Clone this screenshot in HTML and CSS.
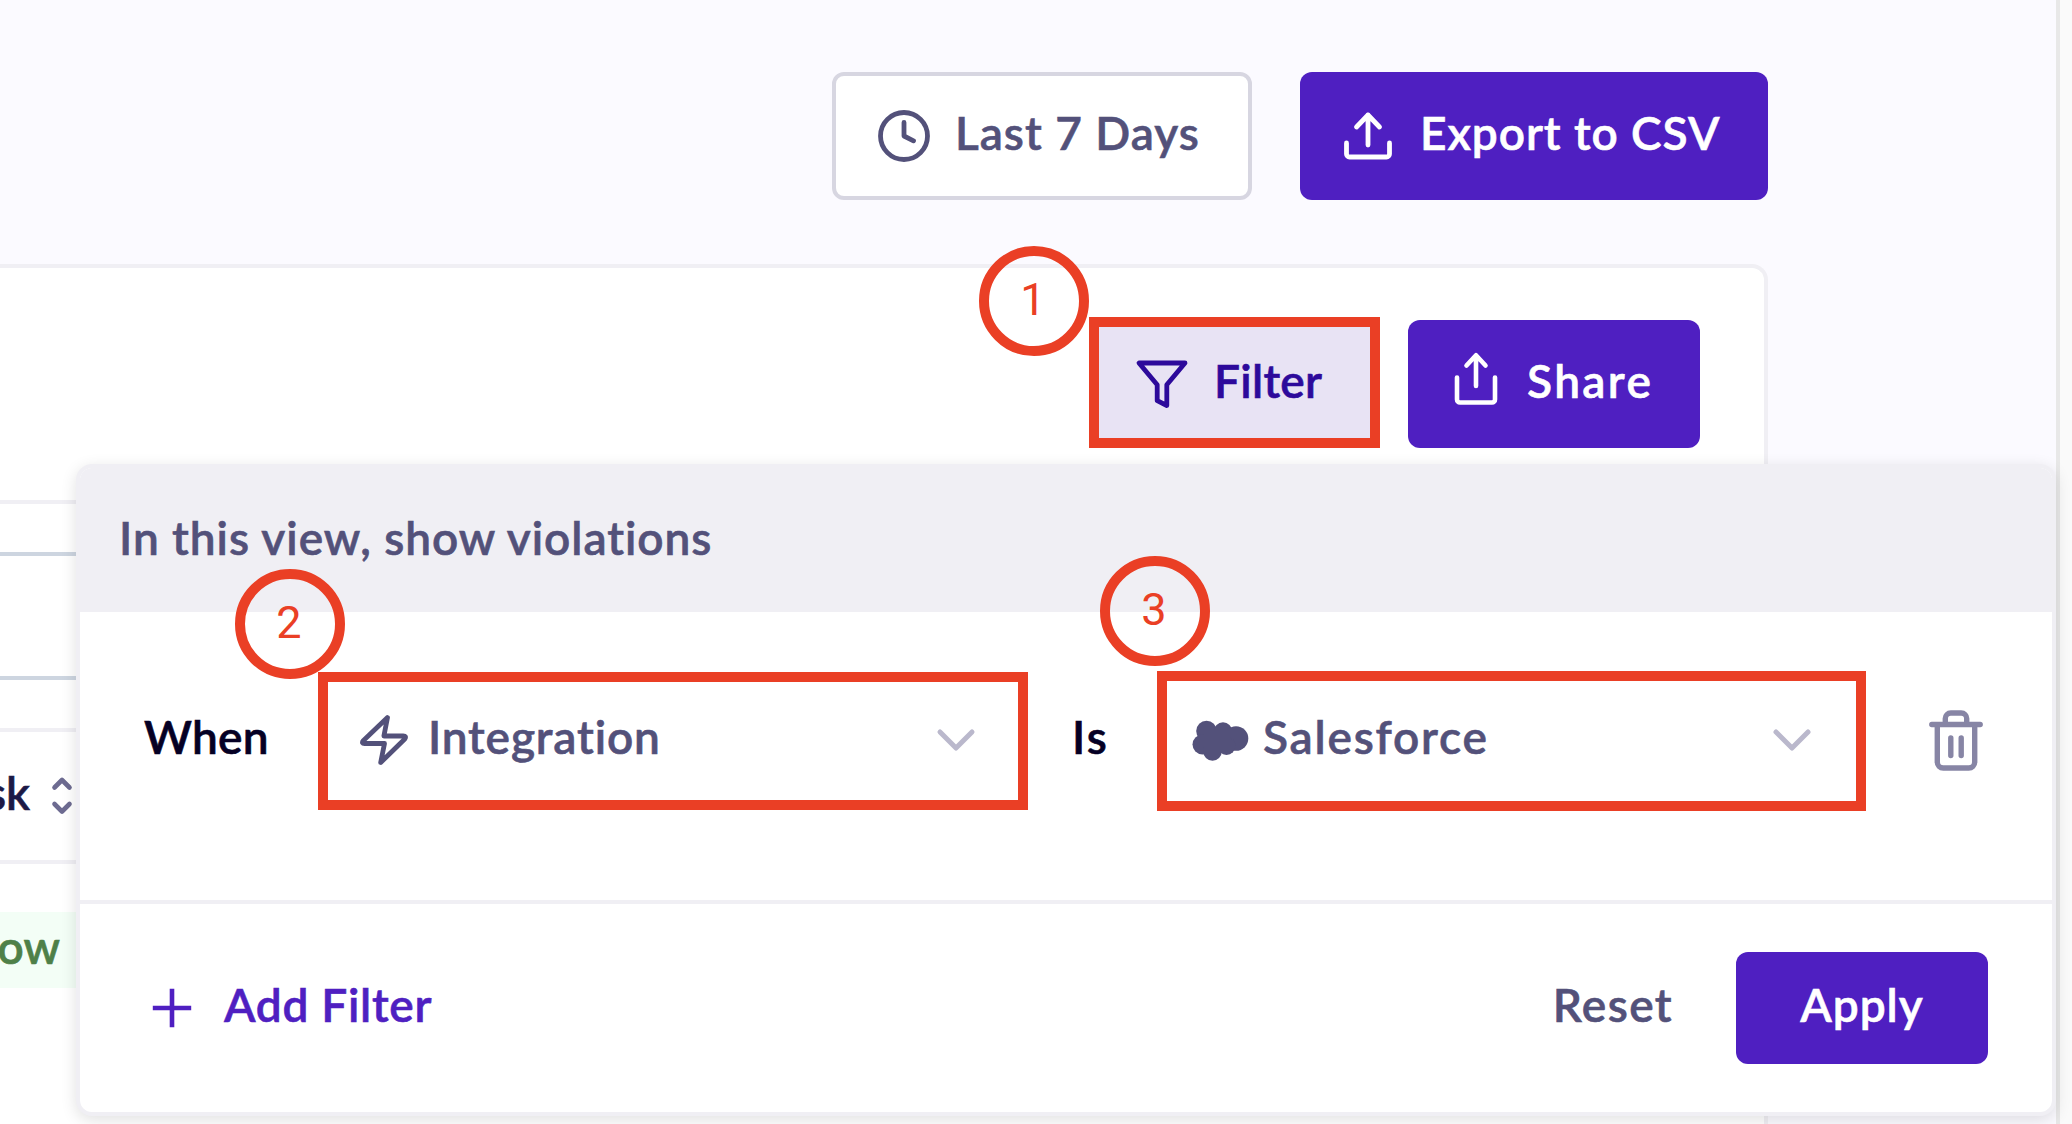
FILE: index.html
```
<!DOCTYPE html>
<html lang="en">
<head>
<meta charset="utf-8">
<title>Violations</title>
<link rel="stylesheet" href="styles.css">
</head>
<body>
<div class="app">
  <main class="main">
    <header class="topbar">
      <button class="btn btn-outline btn-date">
        <svg class="icon" width="56" height="56" viewBox="0 0 56 56" fill="none" stroke="currentColor" stroke-width="4.800" stroke-linecap="round" stroke-linejoin="round"><circle cx="28" cy="28" r="23.5"/><path d="M28 14.500V28l9.500 4.800"/></svg>
        <span class="label label-date">Last 7 Days</span>
      </button>
      <button class="btn btn-primary btn-export">
        <svg class="icon" width="56" height="56" viewBox="0 0 56 56" fill="none" stroke="currentColor" stroke-width="4.800" stroke-linecap="round" stroke-linejoin="round"><path d="M6.500 35v11a3 3 0 0 0 3 3h37a3 3 0 0 0 3-3V35M28 37V7M16.500 19L28 7l11.500 12"/></svg>
        <span class="label label-export">Export to CSV</span>
      </button>
    </header>

    <section class="card">
      <div class="toolbar">
        <button class="btn btn-soft btn-filter">
          <svg class="icon" width="56" height="56" viewBox="0 0 56 56" fill="none" stroke="currentColor" stroke-width="4.800" stroke-linejoin="round"><path d="M5 7h46L32.800 28.800v20.700l-9.600-4.800V28.800z"/></svg>
          <span class="label label-filter">Filter</span>
        </button>
        <button class="btn btn-primary btn-share">
          <svg class="icon" width="56" height="56" viewBox="0 0 56 56" fill="none" stroke="currentColor" stroke-width="4.600" stroke-linecap="round" stroke-linejoin="round"><path d="M9 21.500v22a3 3 0 0 0 3 3h32a3 3 0 0 0 3-3v-22M28 30V.3M18.500 9.500L28-.7l9.500 10.200"/></svg>
          <span class="label label-share">Share</span>
        </button>
      </div>
      <div class="table">
        <div class="row row-tabs"></div>
        <div class="row row-search"></div>
        <div class="row row-gap"></div>
        <div class="row row-head">
          <div class="cell cell-risk">
            <span class="label label-risk">Risk</span>
            <svg class="icon sort" width="20" height="40" viewBox="0 0 20 40" fill="none" stroke="currentColor" stroke-width="4.600" stroke-linecap="round" stroke-linejoin="round"><path d="M2.500 11.500L10 4l7.500 7.500M2.500 28L10 35.500l7.500-7.500"/></svg>
          </div>
        </div>
        <div class="row row-body">
          <div class="cell cell-level"><span class="chip"><span class="label">Low</span></span></div>
        </div>
      </div>
    </section>
  </main>
  <div class="gutter"></div>

  <section class="popover">
    <h2 class="popover-head"><span class="label label-title">In this view, show violations</span></h2>
    <div class="condition">
      <span class="label word-when">When</span>
      <div class="select">
        <svg class="icon" width="56" height="56" viewBox="0 0 56 56" fill="none" stroke="currentColor" stroke-width="4.800" stroke-linecap="round" stroke-linejoin="round"><path d="M31.500 4.500L7.200 27.800q-2 2.700 1.400 2.700H28.500L24.700 49.500L48.800 26q2-3-1.600-3H27.900z"/></svg>
        <span class="label label-integration">Integration</span>
        <svg class="icon chevron" width="38" height="24" viewBox="0 0 38 24" fill="none" stroke="currentColor" stroke-width="5" stroke-linecap="round" stroke-linejoin="round"><path d="M3 3l16 16L35 3"/></svg>
      </div>
      <span class="label word-is">Is</span>
      <div class="select select-value">
        <svg class="icon" width="58" height="42" viewBox="0 0 58 42" fill="currentColor"><circle cx="14.500" cy="11" r="10.300"/><circle cx="31" cy="11.500" r="9.200"/><circle cx="44" cy="18.500" r="12.300"/><circle cx="10.500" cy="24.500" r="10"/><circle cx="20.500" cy="31.500" r="9.300"/><circle cx="34.500" cy="26" r="9"/><path d="M12 10h26v22H12z"/></svg>
        <span class="label label-salesforce">Salesforce</span>
        <svg class="icon chevron" width="38" height="24" viewBox="0 0 38 24" fill="none" stroke="currentColor" stroke-width="5" stroke-linecap="round" stroke-linejoin="round"><path d="M3 3l16 16L35 3"/></svg>
      </div>
      <button class="trash" aria-label="Remove filter">
        <svg class="icon" width="54" height="62" viewBox="0 0 54 62" fill="none" stroke="currentColor" stroke-width="5.400" stroke-linecap="round" stroke-linejoin="round"><path d="M2.800 14.500h48.400M8.300 14.500V52a6 6 0 0 0 6 6h25.400a6 6 0 0 0 6-6V14.500M16.300 14V8.500a5.500 5.500 0 0 1 5.500-5.500h10.400a5.500 5.500 0 0 1 5.500 5.500V14M21.800 28v17.500M32.200 28v17.500"/></svg>
      </button>
    </div>
    <footer class="popover-foot">
      <button class="add">
        <svg class="icon" width="40" height="40" viewBox="0 0 40 40" fill="none" stroke="currentColor" stroke-width="4.600"><path d="M20 .8v38.400M.8 20h38.400"/></svg>
        <span class="label label-add">Add Filter</span>
      </button>
      <button class="reset"><span class="label label-reset">Reset</span></button>
      <button class="btn btn-primary btn-apply"><span class="label label-apply">Apply</span></button>
    </footer>
  </section>

  <div class="mark mark-filter"></div>
  <div class="mark mark-integration"></div>
  <div class="mark mark-salesforce"></div>
  <div class="step step-1">1</div>
  <div class="step step-2">2</div>
  <div class="step step-3">3</div>
</div>
</body>
</html>
```
FILE: styles.css
```
* { box-sizing: border-box; }

body {
  margin: 0;
  font-family: Lato, "Liberation Sans", sans-serif;
  font-size: 46px;
  font-weight: 600;
  line-height: 54px;
  color: #53517a;
}

button {
  font: inherit;
  color: inherit;
  margin: 0;
  padding: 0;
  border: 0;
  background: none;
}

.app {
  position: relative;
  display: flex;
  width: 2072px;
  height: 1124px;
  overflow: hidden;
}

.main {
  display: flex;
  flex-direction: column;
  width: 2056px;
  background: #fbfaff;
}

.gutter {
  flex: 1;
  border-left: 4px solid #e8e8e8;
  background: #fafafa;
}

.icon { display: block; flex: none; overflow: visible; }

.label {
  padding-bottom: 7px;
  white-space: nowrap;
  font-variant-ligatures: none;
  -webkit-text-stroke: .6px currentColor;
}

/* Buttons */

.btn {
  display: flex;
  align-items: center;
  height: 128px;
  border-radius: 12px;
}

.btn-primary { background: #4f1fc1; color: #fff; }
.btn-soft { background: #e8e3f4; color: #2d0a9b; }
.btn-outline { background: #fff; border: 4px solid #d7d6e1; }

.btn-date { width: 420px; padding-left: 40px; }
.btn-export { width: 468px; padding-left: 40px; }
.btn-filter { width: 284px; padding-left: 42px; }
.btn-share { width: 292px; padding-left: 40px; }
.btn-apply { width: 252px; height: 112px; justify-content: center; }

.label-date { margin-left: 23px; letter-spacing: 1px; }
.label-export { margin-left: 24px; letter-spacing: .93px; }
.label-filter { margin-left: 24px; letter-spacing: .3px; }
.label-share { margin-left: 23px; letter-spacing: 2.4px; }
.label-apply { letter-spacing: .95px; }

/* Page */

.topbar {
  display: flex;
  justify-content: flex-end;
  gap: 48px;
  padding: 72px 288px 64px 0;
}

.card {
  flex: 1;
  width: 1768px;
  border: 4px solid #f0eff4;
  border-width: 4px 4px 0 0;
  border-top-right-radius: 16px;
  background: #fff;
}

.toolbar {
  display: flex;
  justify-content: flex-end;
  gap: 32px;
  height: 232px;
  padding: 52px 64px 0 0;
}

.row {
  display: flex;
  align-items: center;
  border-top: 4px solid #f0eff4;
}

.row-tabs { height: 52px; }
.row-search { height: 124px; border-color: #cdd5e0; }
.row-gap { height: 52px; border-color: #cdd5e0; }
.row-head { height: 132px; color: #1c1946; }
.row-body { height: 176px; }

.cell {
  display: flex;
  align-items: center;
  justify-content: flex-end;
}

.cell-risk { width: 72px; gap: 22px; }
.cell-level { width: 84px; }
.sort { color: #6d6b91; }

.chip {
  display: flex;
  align-items: center;
  height: 76px;
  padding: 0 24px;
  background: #f3fef6;
  color: #4e8048;
}

/* Filter popover */

.popover {
  position: absolute;
  left: 76px;
  top: 464px;
  width: 1980px;
  height: 652px;
  border: 4px solid #f0eff4;
  border-radius: 16px;
  background: #fff;
  box-shadow: 0 4px 16px rgba(0, 0, 0, .12);
}

.popover-head {
  display: flex;
  align-items: center;
  height: 144px;
  margin: 0;
  padding: 2px 0 0 39px;
  border-radius: 12px 12px 0 0;
  background: #f0eff4;
  font: inherit;
}

.label-title { letter-spacing: .96px; }

.condition {
  display: grid;
  grid-template-columns: 238px 710px 129px 709px 186px;
  align-items: center;
  height: 288px;
  padding: 60px 0 90px;
}

.condition .label { padding-bottom: 8px; }
.word-when { padding-left: 64px; color: #050024; letter-spacing: .3px; }
.word-is { padding-left: 44px; color: #050024; letter-spacing: 2.2px; }

.select {
  display: flex;
  align-items: center;
  height: 138px;
  padding: 0 53px 0 38px;
}

.select-value { padding: 0 55px 0 35px; }
.label-integration { margin-left: 16px; letter-spacing: .85px; }
.label-salesforce { margin-left: 13px; letter-spacing: 1.8px; }
.chevron { margin-left: auto; color: #bab8cc; }
.trash { justify-self: start; margin-left: 63px; color: #8785a5; }

.popover-foot {
  display: flex;
  align-items: center;
  height: 212px;
  padding: 0 64px 0 72px;
  border-top: 4px solid #f0eff4;
}

.add { display: flex; align-items: center; color: #4f1fc1; }
.label-add { margin-left: 32px; letter-spacing: .72px; }
.reset { display: flex; margin-left: auto; margin-right: 63px; }
.label-reset { letter-spacing: 1.4px; }

/* Numbered walkthrough marks */

.mark {
  position: absolute;
  border: 10px solid #ea3f25;
}

.mark-filter { left: 1089px; top: 317px; width: 291px; height: 131px; }
.mark-integration { left: 318px; top: 672px; width: 710px; height: 138px; }
.mark-salesforce { left: 1157px; top: 671px; width: 709px; height: 140px; }

.step {
  position: absolute;
  display: flex;
  justify-content: center;
  width: 110px;
  height: 110px;
  padding: 17px 2px 0 0;
  border: 10px solid #ea3f25;
  border-radius: 50%;
  color: #ea3f25;
  font: 400 45px/54px Roboto, "Liberation Sans", sans-serif;
}

.step-1 { left: 979px; top: 246px; }
.step-2 { left: 235px; top: 569px; }
.step-3 { left: 1100px; top: 556px; }
```
